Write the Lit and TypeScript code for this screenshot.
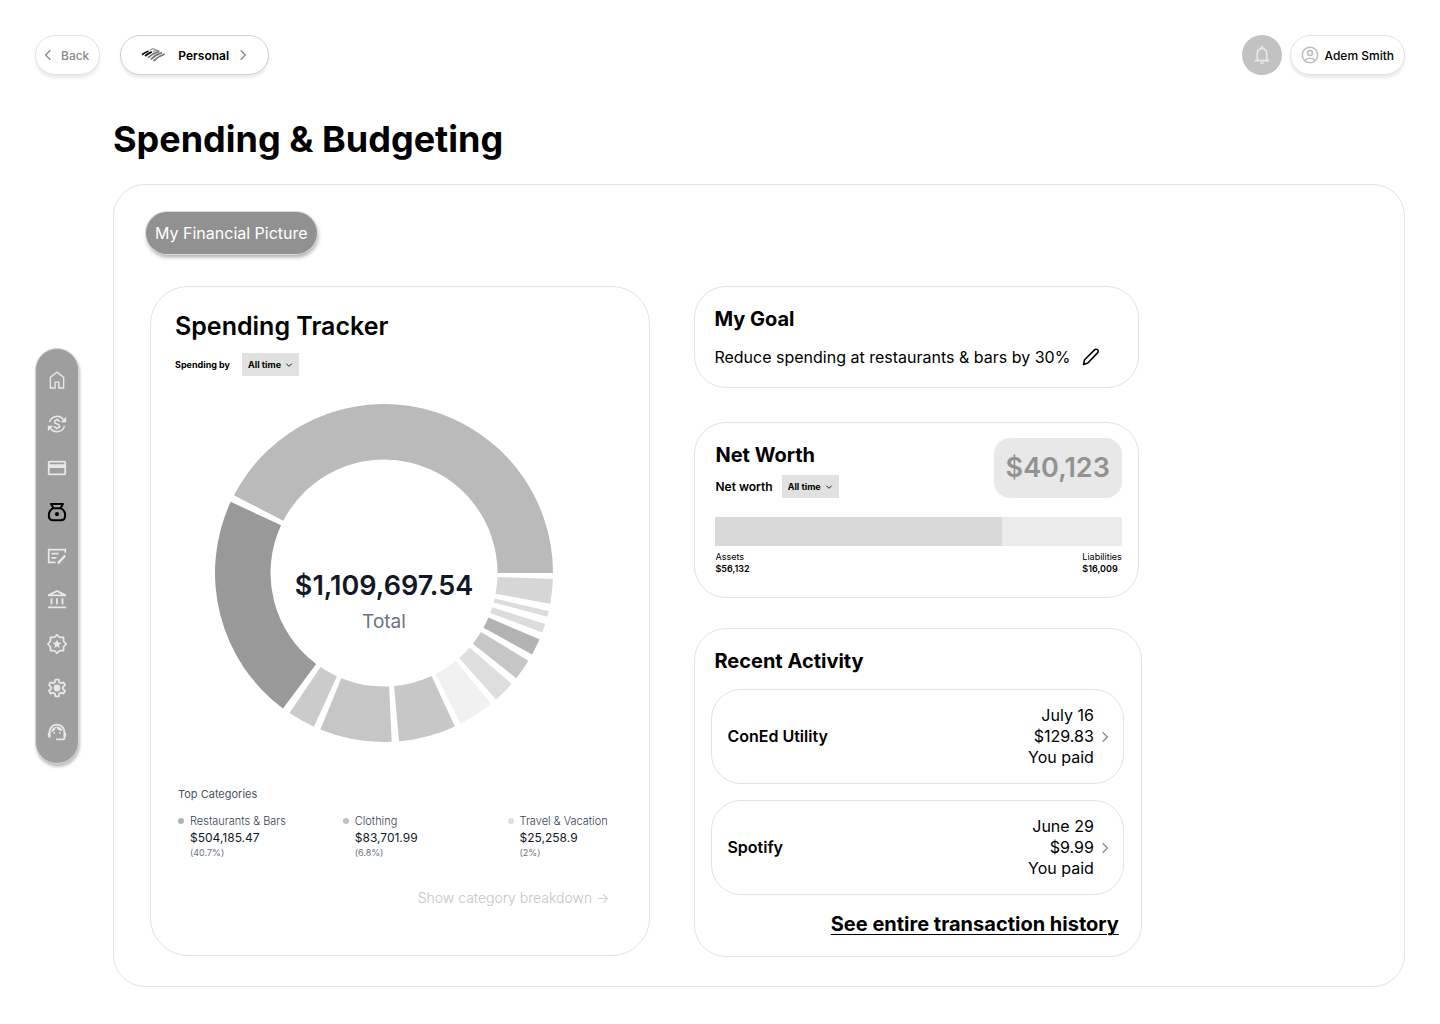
import { LitElement, html, svg, css } from "lit";
import { customElement } from "lit/decorators.js";
import { classMap } from "lit/directives/class-map.js";

const icons = {
  home: svg`<path fill="currentColor" d="M5.500 20h3.700v-6.500h5.600V20h3.700V9.500L12 4.300 5.500 9.500zM4 21.500V8.700l8-6.300 8 6.300v12.800h-6.700V15h-2.600v6.500z"/>`,
  exchange: svg`<g fill="none" stroke="currentColor" stroke-width="1.700"><path d="M3.800 10A8.600 8.600 0 0 1 19 7"/><path d="M20.200 14A8.600 8.600 0 0 1 5 17"/><path d="M14.800 9.600C14.500 8.200 13.400 7.700 12 7.700c-1.600 0-2.700.8-2.700 2 0 3 5.600 1.500 5.600 4.500 0 1.300-1.200 2.100-2.900 2.100-1.600 0-2.700-.7-3-2.100M12 6v1.800M12 16.200V18"/></g><path fill="currentColor" d="M22 4v6h-6zM2 20v-6h6z"/>`,
  card: svg`<path fill="currentColor" d="M20 4H4c-1.110 0-1.990.890-1.990 2L2 18c0 1.110.890 2 2 2h16c1.110 0 2-.890 2-2V6c0-1.110-.890-2-2-2zm0 14H4v-6h16v6zm0-10H4V6h16v2z"/>`,
  bag: svg`<path fill="none" stroke="currentColor" stroke-width="2.200" stroke-linejoin="round" d="M5.500 3.200h13l-2.700 4.600c3.200 1.500 5.100 4.600 5.100 7.900 0 3.300-2 5.300-5.200 5.300H8.300c-3.200 0-5.200-2-5.200-5.300 0-3.300 1.900-6.400 5.100-7.900zM8.200 7.800h7.600"/><circle cx="12" cy="14.300" r="2.300" fill="currentColor"/>`,
  note: svg`<g fill="none" stroke="currentColor" stroke-width="1.900"><path d="M10.500 19H3V5h18v3.500"/><path d="M6 9.500h8M6 14h5.500"/><path d="M13 20l8-8.500" stroke-width="2.600"/></g>`,
  bank: svg`<path fill="currentColor" d="M7 10H5v7h2zm6 0h-2v7h2zm9 9H2v2h20zm-3-9h-2v7h2zM12 3.260 17.210 6H6.790zM12 1 2 6v2h20V6z"/>`,
  badge: svg`<path fill="none" stroke="currentColor" stroke-width="1.900" stroke-linejoin="round" d="M12 2l3 2.800 4.100.100.100 4.100L22 12l-2.800 3-.100 4.100-4.100.100L12 22l-3-2.800-4.100-.100-.100-4.100L2 12l2.800-3 .100-4.100 4.100-.100z"/><path fill="currentColor" d="M12 7.200l1.400 3.200 3.400.300-2.600 2.300.800 3.400-3-1.800-3 1.800.800-3.400-2.600-2.300 3.400-.300z"/>`,
  gear: svg`<path fill="none" stroke="currentColor" stroke-width="2" stroke-linejoin="round" d="M10.200 2.800h3.600l.500 2.900 1.900 1.100 2.800-1 1.800 3.100-2.300 1.900v2.300l2.300 1.900-1.800 3.100-2.800-1-1.900 1.100-.500 2.900h-3.600l-.500-2.900-1.900-1.100-2.800 1L3.200 15l2.300-1.900v-2.300L3.200 8.900 5 5.800l2.800 1 1.900-1.100z"/><circle cx="12" cy="12" r="3.700" fill="currentColor"/>`,
  agent: svg`<path fill="currentColor" d="M21 12.220C21 6.730 16.740 3 12 3c-4.690 0-9 3.650-9 9.280-.600.340-1 .980-1 1.720v2c0 1.100.900 2 2 2h1v-6.100c0-3.870 3.130-7 7-7s7 3.130 7 7V19h-8v2h8c1.100 0 2-.900 2-2v-1.220c.590-.310 1-.920 1-1.640v-2.300c0-.700-.410-1.310-1-1.620z"/><circle cx="9" cy="13" r="1" fill="currentColor"/><circle cx="15" cy="13" r="1" fill="currentColor"/><path fill="currentColor" d="M18 11.030C17.520 8.180 15.040 6 12.050 6c-3.030 0-6.290 2.510-6.030 6.450a8.075 8.075 0 0 0 4.860-5.890c1.310 2.630 4 4.440 7.120 4.470z"/>`,
  bell: svg`<path fill="currentColor" d="M4 19v-1.700h2V10q0-2.075 1.250-3.687T10.500 4.200v-.700q0-.625.438-1.062T12 2t1.063.438T13.500 3.500v.700q2 .500 3.250 2.113T18 10v7.300h2V19zm8 3q-.825 0-1.412-.587T10 20h4q0 .825-.587 1.413T12 22m-4.300-4.700h8.600V10q0-1.650-1.275-2.925T12 5.800 8.975 7.075 7.700 10z"/>`,
  user: svg`<g fill="none" stroke="currentColor" stroke-width="1.800"><circle cx="12" cy="12" r="9.300"/><circle cx="12" cy="9.500" r="3"/><path d="M5.500 18.500c1.600-1.800 3.900-2.700 6.500-2.700s4.900.9 6.500 2.700"/></g>`,
  left: svg`<path fill="none" stroke="currentColor" stroke-width="2" d="M15.500 5l-7 7 7 7"/>`,
  right: svg`<path fill="none" stroke="currentColor" stroke-width="2" d="M8.500 5l7 7-7 7"/>`,
  down: svg`<path fill="none" stroke="currentColor" stroke-width="2.600" d="M4 8l8 8 8-8"/>`,
  pencil: svg`<path fill="none" stroke="currentColor" stroke-width="2" stroke-linejoin="round" d="M2 22l1.500-6.300L16.700 2.500c1.300-1.300 3-1.200 4.100-.1s1.200 2.800-.1 4.100L7.800 20.100z"/>`,
};

type IconName = keyof typeof icons;

const icon = (name: IconName, size = "") =>
  html`<svg class="icon ${size}" viewBox="0 0 24 24" aria-hidden="true">${icons[name]}</svg>`;

const nav: { icon: IconName; label: string; active?: boolean }[] = [
  { icon: "home", label: "Home" },
  { icon: "exchange", label: "Transfers" },
  { icon: "card", label: "Cards" },
  { icon: "bag", label: "Spending", active: true },
  { icon: "note", label: "Checks" },
  { icon: "bank", label: "Accounts" },
  { icon: "badge", label: "Rewards" },
  { icon: "gear", label: "Settings" },
  { icon: "agent", label: "Support" },
];

/** Start angle, end angle (degrees clockwise from three o'clock) and fill. */
const slices: [number, number, string][] = [
  [2, 10.5, "#d6d6d6"],
  [13, 15, "#dcdcdc"],
  [17.600, 20.600, "#dcdcdc"],
  [23.100, 28.800, "#b3b3b3"],
  [31.300, 38.500, "#c6c6c6"],
  [41, 48.500, "#dedede"],
  [50.700, 63, "#f1f1f1"],
  [65.200, 84.900, "#c7c7c7"],
  [87.400, 112.100, "#c6c6c6"],
  [114.500, 124, "#cbcbcb"],
  [126.700, 204.900, "#999999"],
  [207.400, 360, "#bababa"],
];

const OUTER = 169;
const INNER = 113.5;

const slicePath = (from: number, to: number) => {
  const at = (r: number, deg: number) => {
    const a = (deg * Math.PI) / 180;
    return `${(OUTER + r * Math.cos(a)).toFixed(2)} ${(OUTER + r * Math.sin(a)).toFixed(2)}`;
  };
  const large = to - from > 180 ? 1 : 0;
  return `M${at(OUTER, from)}A${OUTER} ${OUTER} 0 ${large} 1 ${at(OUTER, to)}L${at(INNER, to)}A${INNER} ${INNER} 0 ${large} 0 ${at(INNER, from)}Z`;
};

const categories = [
  { name: "Restaurants & Bars", amount: "$504,185.47", share: "(40.7%)", tone: "dark" },
  { name: "Clothing", amount: "$83,701.99", share: "(6.8%)", tone: "mid" },
  { name: "Travel & Vacation", amount: "$25,258.9", share: "(2%)", tone: "light" },
];

const activity = [
  { name: "ConEd Utility", date: "July 16", amount: "$129.83", note: "You paid" },
  { name: "Spotify", date: "June 29", amount: "$9.99", note: "You paid" },
];

const assetShare = 70.4;

@customElement("app-root")
export class AppRoot extends LitElement {
  static styles = css`
    :host {
      display: block;
      font-family: Inter, "Liberation Sans", sans-serif;
      color: #000;
      background: #fff;
    }
    * { box-sizing: border-box; margin: 0; padding: 0; }
    button, select { font: inherit; color: inherit; border: 0; background: none; cursor: pointer; }
    a { color: inherit; text-decoration: none; }
    ul { list-style: none; }
    .icon { display: block; width: 22px; height: 22px; flex: none; }
    .icon.xs { width: 8px; height: 8px; }
    .icon.sm { width: 16px; height: 16px; }
    .icon.md { width: 20px; height: 20px; }

    .page { min-height: 100vh; padding: 35px 35px 38px; }
    .top { display: flex; align-items: center; gap: 20px; font-size: 12px; font-weight: 500; }
    .pill {
      display: flex; align-items: center; height: 40px;
      border: 1px solid #e2e2e2; border-radius: 20px; background: #fff;
      box-shadow: 0 3px 3px rgba(0, 0, 0, 0.08);
    }
    .back { gap: 5px; padding: 0 10px 0 4px; color: #8a8a8a; }
    .account { gap: 12px; padding: 0 17px 0 19px; border-color: #d0d0d0; font-weight: 600; }
    .account .icon { color: #888; margin-left: -6px; }
    .logo { display: block; width: 26px; height: 16px; }
    .user { gap: 5px; padding: 0 10px 0 9px; }
    .user .icon { color: #bdbdbd; }
    .tools { display: flex; gap: 8px; margin-left: auto; }
    .bell {
      display: grid; place-items: center; width: 40px; height: 40px;
      border-radius: 50%; background: #c2c2c2; color: #e9e9e9;
    }

    .body { display: grid; grid-template-columns: 44px minmax(0, 1fr); gap: 34px; align-items: start; }
    .rail {
      display: flex; flex-direction: column; gap: 22px; align-items: center;
      margin-top: 273px; padding: 20px 0;
      border: 1px solid #d4d4d4; border-radius: 22px; background: #9e9e9e; color: #e8e8e8;
      box-shadow: 1px 3px 3px rgba(0, 0, 0, 0.25);
    }
    .rail a.active { color: #000; }

    h1 { margin-top: 40px; font-size: 36px; line-height: 48px; font-weight: 700; }
    .panel {
      margin-top: 21px; padding: 27px 0 29px 36px;
      border: 1px solid #e2e2e2; border-radius: 32px;
    }
    .tab {
      display: block; height: 42px; padding: 0 9px; margin-left: -4px; border-radius: 21px;
      background: #919191; color: #fff; font-size: 16px;
      box-shadow: 0 0 0 1px #d8d8d8, 1px 3px 4px rgba(0, 0, 0, 0.35);
    }
    .cards {
      display: grid; grid-template-columns: 500fr 447fr 218fr; gap: 44px;
      align-items: start; margin-top: 32px;
    }
    .card { border: 1px solid #e2e2e2; border-radius: 32px; }
    h2 { font-size: 20px; line-height: 28px; font-weight: 700; }

    .tracker { padding: 23px 40px 47px 24px; border-radius: 38px; }
    .tracker h2 { font-size: 25px; line-height: 32px; font-weight: 600; }
    .filter { display: flex; align-items: center; gap: 12px; font-size: 9px; font-weight: 700; }
    .tracker .filter { margin-top: 11px; }
    .select { display: grid; grid-template-columns: 1fr 14px; align-items: center; width: 57px; height: 23px; background: #e1e1e1; }
    .select select {
      grid-area: 1 / 1 / 2 / 3; height: 23px; padding-left: 6px;
      appearance: none; font-size: 9px; font-weight: 700;
    }
    .select .icon { grid-area: 1 / 2; pointer-events: none; }

    .donut { display: grid; width: 338px; max-width: 100%; margin: 28px 0 0 40px; }
    .donut > * { grid-area: 1 / 1; }
    .ring { display: block; width: 100%; }
    .total { align-self: center; padding-top: 57px; text-align: center; }
    .sum { font-size: 27px; line-height: 40px; font-weight: 600; color: #111827; }
    .caption { font-size: 19px; line-height: 32px; color: #6b7280; }

    .top-cats { margin: 44px 3px 0; font-size: 11px; line-height: 16px; color: #4b5563; font-weight: 400; }
    .cats { display: grid; grid-template-columns: 165fr 165fr 102fr; margin: 11px 0 0 3px; }
    .cats li { display: grid; grid-template-columns: 6px 1fr; column-gap: 6px; align-items: center; white-space: nowrap; }
    .dot { width: 6px; height: 6px; border-radius: 50%; }
    .dot.dark { background: #b3b3b3; }
    .dot.mid { background: #c2c2c2; }
    .dot.light { background: #dedede; }
    .cat { font-size: 11px; line-height: 16px; font-weight: 300; color: #374151; }
    .amount { grid-column: 2; font-size: 12px; line-height: 17px; color: #111827; }
    .share { grid-column: 2; font-size: 9px; line-height: 13px; color: #6b7280; }
    .more { display: block; margin-top: 29px; text-align: right; font-size: 14px; line-height: 20px; font-weight: 300; color: #c4c4c4; }

    .side { display: flex; flex-direction: column; }
    .goal { margin-right: 3px; padding: 18px 20px 18px 19px; }
    .goal-row { display: flex; align-items: center; gap: 12px; margin-top: 12px; font-size: 16px; line-height: 24px; }
    .goal-row .icon { width: 18px; height: 18px; }

    .worth { margin: 34px 3px 0 0; padding: 15px 16px 22px 20px; }
    .worth-top { display: flex; justify-content: space-between; }
    .worth-top h2 { margin-top: 3px; }
    .worth .filter { margin-top: 6px; gap: 9px; font-size: 12px; font-weight: 600; }
    .net { padding: 0 12px; border-radius: 16px; background: #e8e8e8; color: #929292; font-size: 27px; line-height: 60px; font-weight: 600; }
    .bar { display: flex; height: 29px; margin-top: 19px; background: #ebebeb; }
    .fill { background: #d9d9d9; }
    .legend { display: flex; justify-content: space-between; margin-top: 5px; font-size: 9px; line-height: 12px; }
    .legend dd { font-weight: 600; }

    .recent { margin-top: 30px; padding: 18px 17px 18px 16px; }
    .recent h2 { padding-left: 3px; }
    .rows { display: grid; gap: 16px; margin-top: 14px; }
    .row {
      display: flex; align-items: center; justify-content: space-between; width: 100%;
      padding: 15px 10px 15px 15px; border: 1px solid #e2e2e2; border-radius: 30px;
      font-size: 16px; line-height: 21px;
    }
    .who { font-weight: 600; }
    .detail { display: flex; align-items: center; gap: 3px; text-align: right; }
    .detail .icon { color: #8a8a8a; }
    .line { display: block; }
    .history { display: block; margin-top: 15px; padding-right: 5px; text-align: right; font-size: 20px; line-height: 28px; font-weight: 700; }
    .history a { text-decoration: underline; text-decoration-thickness: 1px; text-underline-offset: 3px; }
  `;

  private period(id: string, label: string) {
    return html`<div class="filter">
      <label for=${id}>${label}</label>
      <span class="select">
        <select id=${id}><option>All time</option></select>
        ${icon("down", "xs")}
      </span>
    </div>`;
  }

  render() {
    return html`<div class="page">
      <header class="top">
        <button class="pill back">${icon("left", "sm")}Back</button>
        <button class="pill account">
          <svg class="logo" viewBox="0 0 26 16" aria-hidden="true">
            <g fill="none" stroke-width="1.800">
              <path d="M2 7.800C4 6.200 6 5 8.500 4" stroke="#111" />
              <path d="M5 9C7 7.300 9.200 5.900 11.800 4.900" stroke="#111" />
              <path d="M9.500 3.200l3.500-1.600 3.400 1.500M13 4.700l3.500-1.600 3 1.200" stroke="#999" stroke-width="1.200" />
              <path d="M8 10.600C11.300 7.800 15 5.700 19.200 4.400" stroke="#777" />
              <path d="M10.800 12.300C14.200 9.200 17.800 7.100 22 5.700" stroke="#777" />
              <path d="M13.600 14C17 10.700 20.500 8.500 24.800 7" stroke="#777" />
            </g>
          </svg>
          Personal ${icon("right", "sm")}
        </button>
        <div class="tools">
          <button class="bell" aria-label="Notifications">${icon("bell")}</button>
          <button class="pill user">${icon("user", "md")}Adem Smith</button>
        </div>
      </header>

      <div class="body">
        <nav class="rail" aria-label="Main">
          ${nav.map(
            (item) => html`<a href="#" class=${classMap({ active: !!item.active })} aria-label=${item.label}>${icon(item.icon)}</a>`
          )}
        </nav>
        <main>
          <h1>Spending &amp; Budgeting</h1>
          <div class="panel">
            <button class="tab">My Financial Picture</button>
            <div class="cards">
              <section class="card tracker">
                <h2>Spending Tracker</h2>
                ${this.period("spending", "Spending by")}
                <div class="donut">
                  <svg class="ring" viewBox="0 0 338 338" aria-hidden="true">
                    ${slices.map(([from, to, fill]) => svg`<path d=${slicePath(from, to)} fill=${fill} />`)}
                  </svg>
                  <div class="total">
                    <p class="sum">$1,109,697.54</p>
                    <p class="caption">Total</p>
                  </div>
                </div>
                <h3 class="top-cats">Top Categories</h3>
                <ul class="cats">
                  ${categories.map(
                    (c) => html`<li>
                      <span class="dot ${c.tone}"></span><span class="cat">${c.name}</span>
                      <span class="amount">${c.amount}</span><span class="share">${c.share}</span>
                    </li>`
                  )}
                </ul>
                <a class="more" href="#">Show category breakdown →</a>
              </section>

              <div class="side">
                <section class="card goal">
                  <h2>My Goal</h2>
                  <div class="goal-row">
                    <p>Reduce spending at restaurants &amp; bars by 30%</p>
                    <button aria-label="Edit goal">${icon("pencil")}</button>
                  </div>
                </section>

                <section class="card worth">
                  <div class="worth-top">
                    <div>
                      <h2>Net Worth</h2>
                      ${this.period("worth", "Net worth")}
                    </div>
                    <p class="net">$40,123</p>
                  </div>
                  <div class="bar"><div class="fill" style="width:${assetShare}%"></div></div>
                  <div class="legend">
                    <dl><dt>Assets</dt><dd>$56,132</dd></dl>
                    <dl><dt>Liabilities</dt><dd>$16,009</dd></dl>
                  </div>
                </section>

                <section class="card recent">
                  <h2>Recent Activity</h2>
                  <div class="rows">
                    ${activity.map(
                      (a) => html`<button class="row">
                        <span class="who">${a.name}</span>
                        <span class="detail">
                          <span>
                            <span class="line">${a.date}</span>
                            <span class="line">${a.amount}</span>
                            <span class="line">${a.note}</span>
                          </span>
                          ${icon("right", "sm")}
                        </span>
                      </button>`
                    )}
                  </div>
                  <p class="history"><a href="#">See entire transaction history</a></p>
                </section>
              </div>
            </div>
          </div>
        </main>
      </div>
    </div>`;
  }
}
